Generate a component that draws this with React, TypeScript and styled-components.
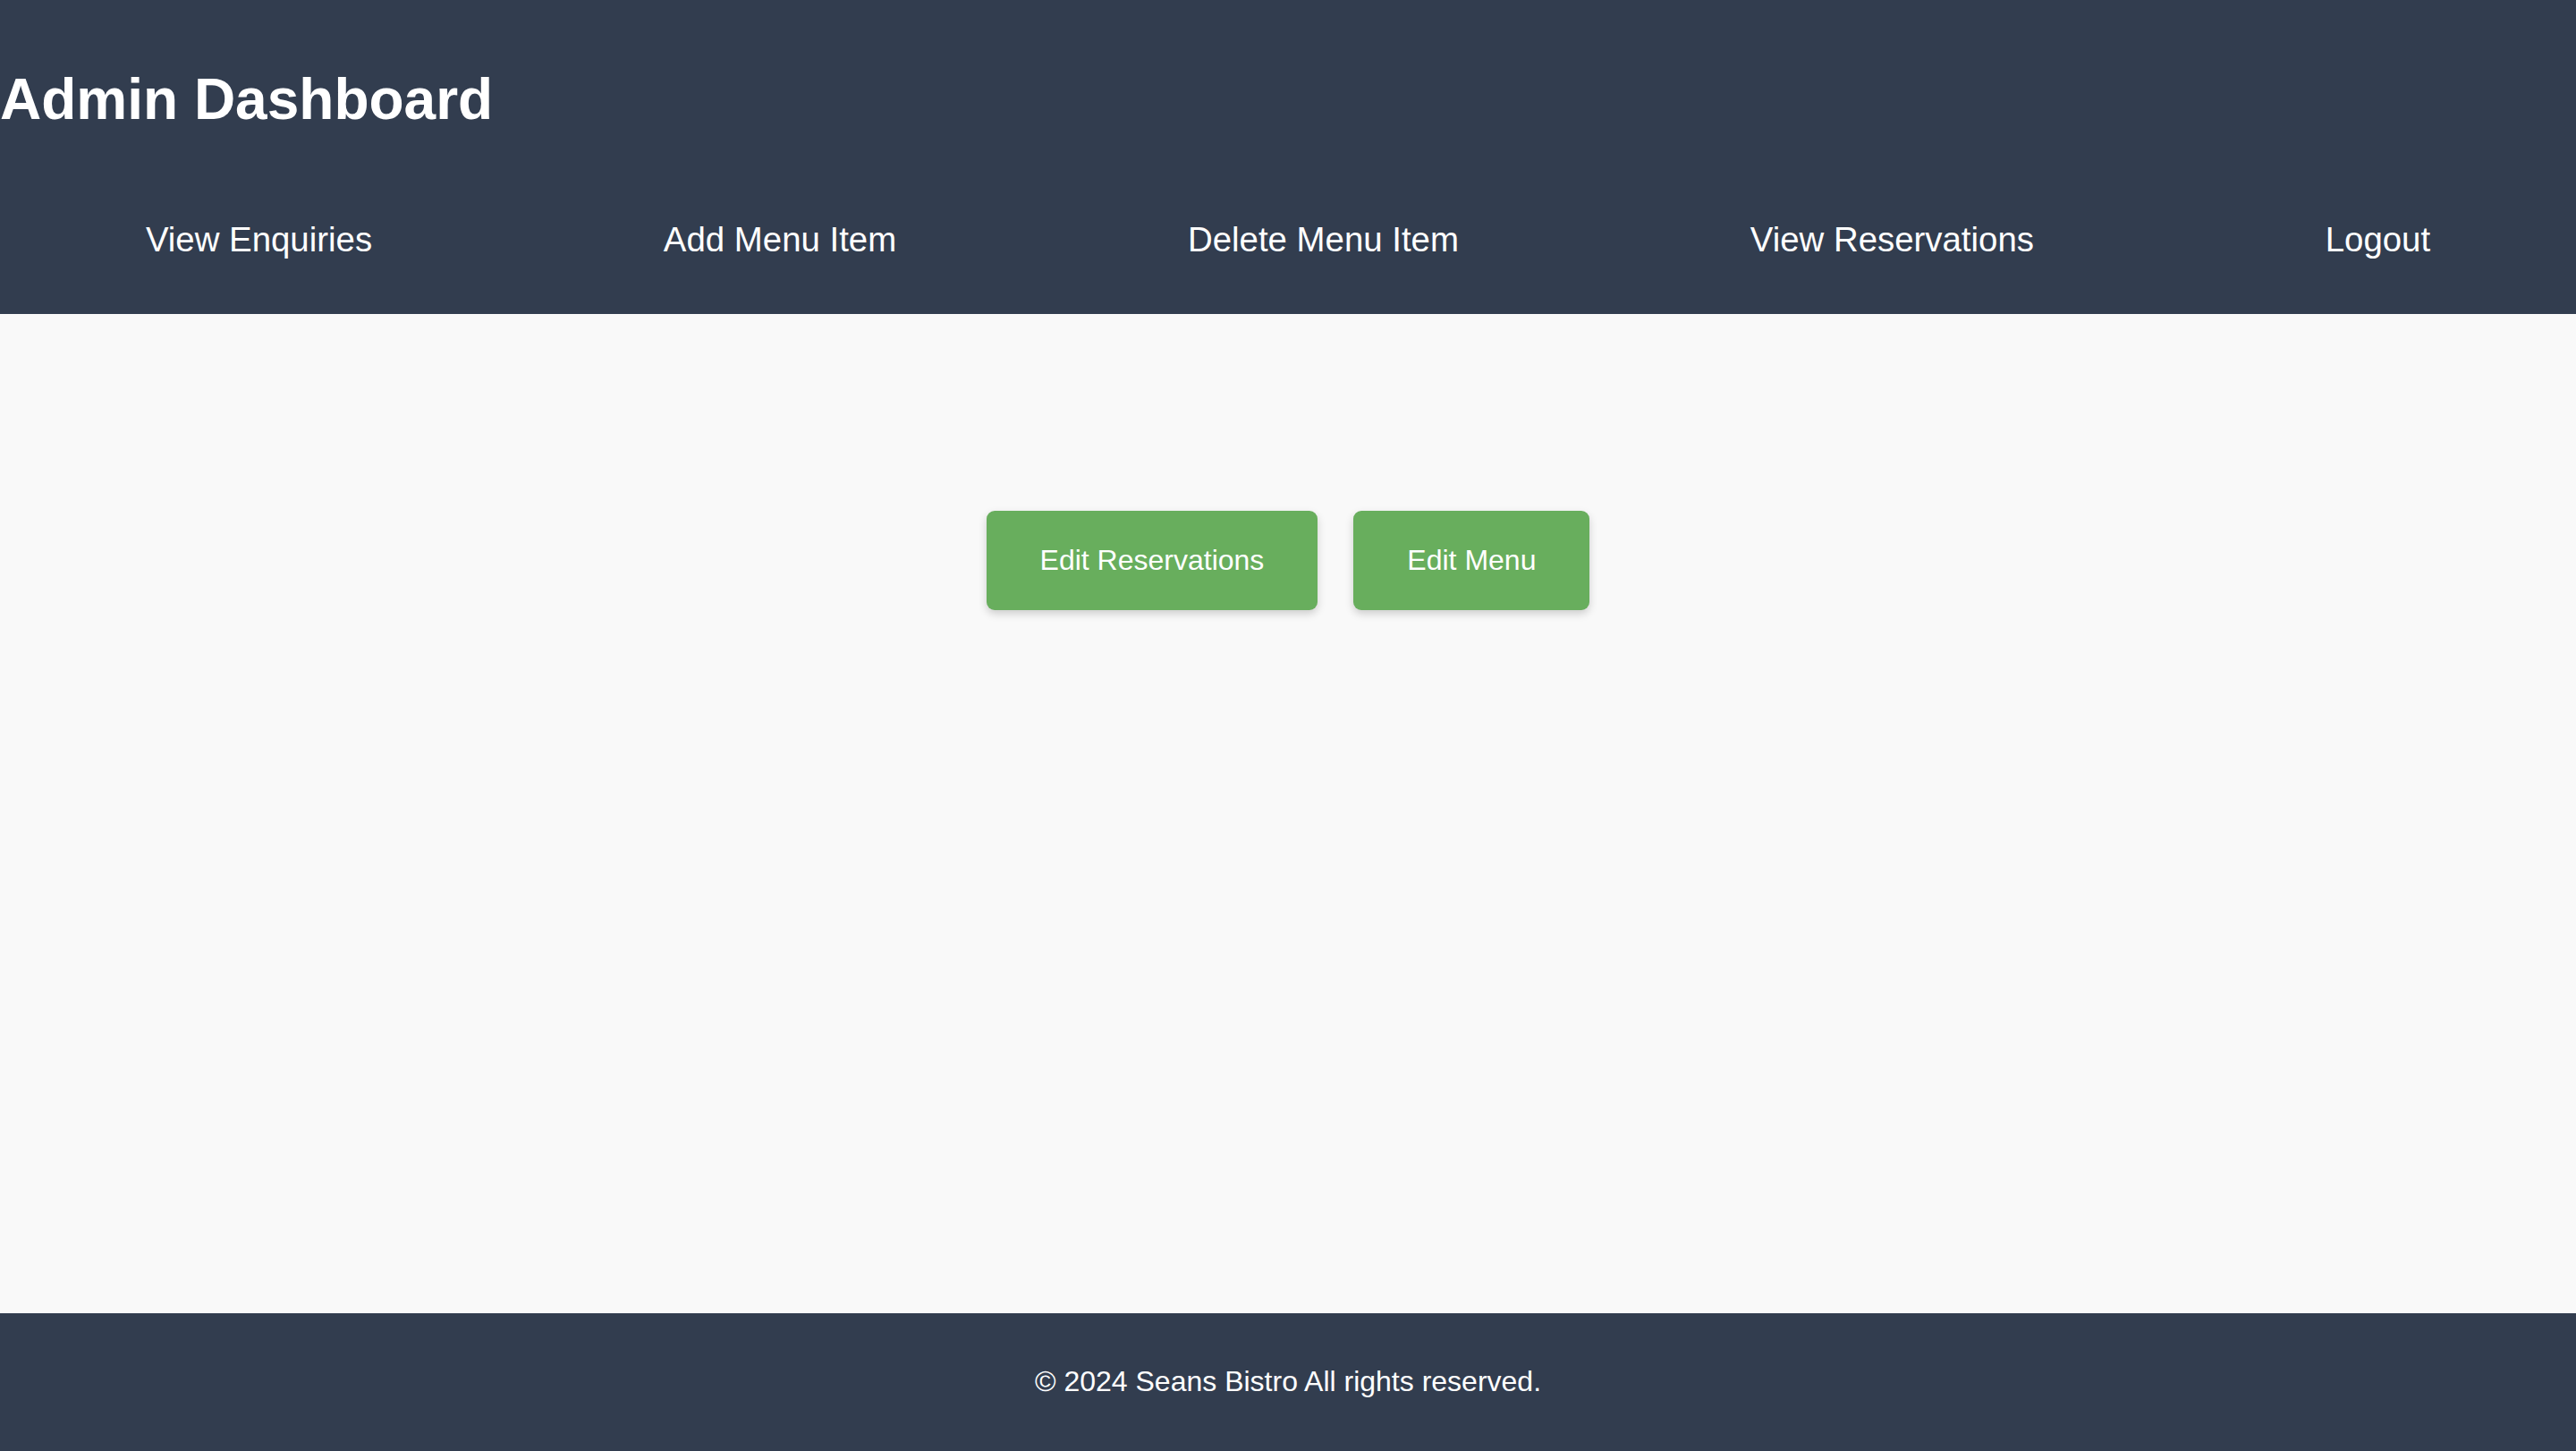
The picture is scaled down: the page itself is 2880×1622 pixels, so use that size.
import React from "react";
import styled, { createGlobalStyle } from "styled-components";

const GlobalStyle = createGlobalStyle`
  html, body {
    margin: 0;
    padding: 0;
    background: #f9f9f9;
    font-family: "Liberation Sans", Arial, sans-serif;
  }
  * { box-sizing: border-box; }
`;

const Page = styled.div`
  min-height: 100vh;
  display: flex;
  flex-direction: column;
  background: #f9f9f9;
`;

const Header = styled.header`
  background: #323d4f;
  color: #ffffff;
  padding: 31px 0 0;
`;

const Title = styled.h1`
  margin: 43px 0;
  font-size: 64px;
  font-weight: 700;
  line-height: normal;
  color: #ffffff;
`;

const Nav = styled.nav`
  display: flex;
  justify-content: space-around;
  align-items: center;
  padding: 55px 0 61px;
`;

const NavLink = styled.a`
  color: #ffffff;
  text-decoration: none;
  font-size: 38.4px;
  line-height: normal;
  cursor: pointer;
`;

const Main = styled.main`
  flex: 1;
  display: flex;
  justify-content: center;
  align-items: flex-start;
  gap: 40px;
  padding-top: 220px;
`;

const ActionButton = styled.button`
  background: #68ae5d;
  color: #ffffff;
  border: none;
  border-radius: 9px;
  padding: 37px 60px;
  font-family: "Liberation Sans", Arial, sans-serif;
  font-size: 32px;
  line-height: normal;
  cursor: pointer;
  box-shadow: 0 4px 10px rgba(0, 0, 0, 0.18);
`;

const Footer = styled.footer`
  background: #323d4f;
  color: #ffffff;
  text-align: center;
  padding: 58.75px 0;
  font-size: 32px;
  line-height: normal;
`;

const navItems = [
  "View Enquiries",
  "Add Menu Item",
  "Delete Menu Item",
  "View Reservations",
  "Logout",
];

export default function App() {
  return (
    <>
      <GlobalStyle />
      <Page>
        <Header>
          <Title>Admin Dashboard</Title>
          <Nav>
            {navItems.map((item) => (
              <NavLink key={item} href="#">
                {item}
              </NavLink>
            ))}
          </Nav>
        </Header>
        <Main>
          <ActionButton>Edit Reservations</ActionButton>
          <ActionButton>Edit Menu</ActionButton>
        </Main>
        <Footer>© 2024 Seans Bistro All rights reserved.</Footer>
      </Page>
    </>
  );
}
